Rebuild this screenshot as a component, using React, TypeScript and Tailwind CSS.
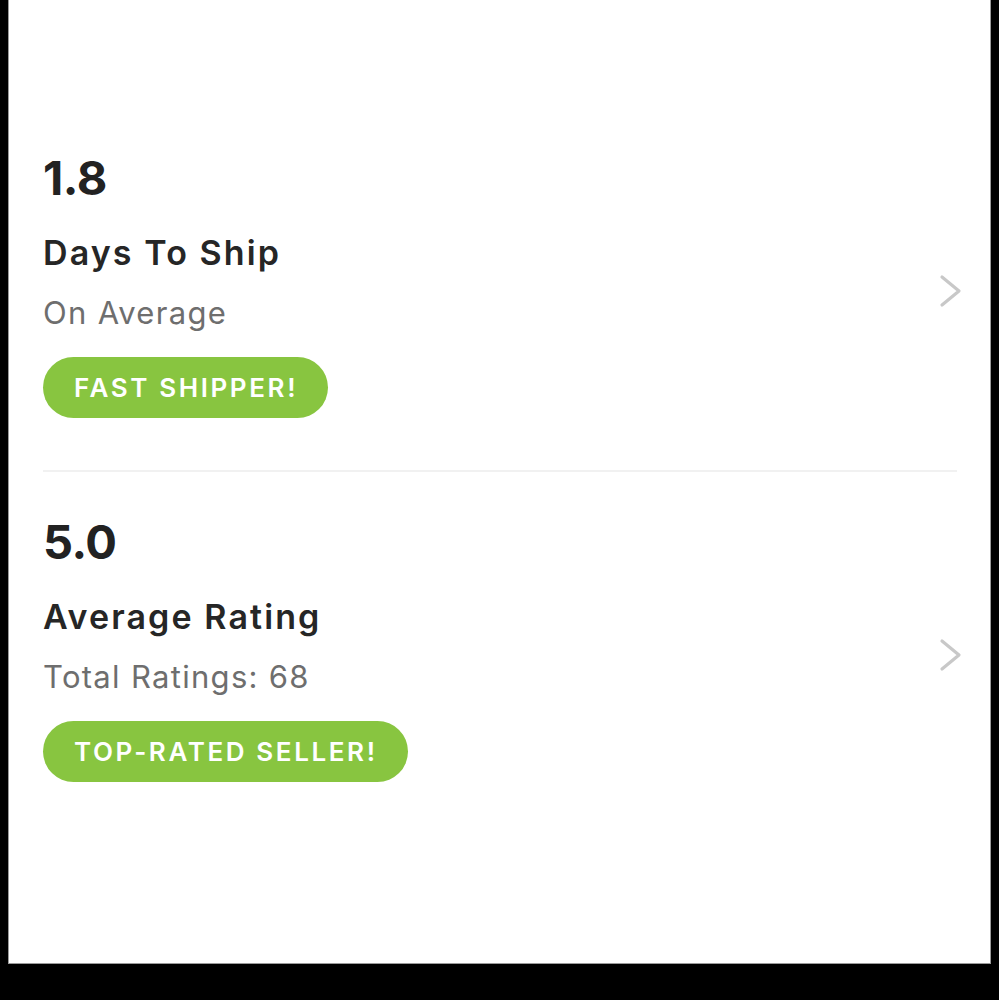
type Stat = {
  value: string;
  title: string;
  subtitle: string;
  badge: string;
};

const stats: Stat[] = [
  { value: "1.8", title: "Days To Ship", subtitle: "On Average", badge: "FAST SHIPPER!" },
  { value: "5.0", title: "Average Rating", subtitle: "Total Ratings: 68", badge: "TOP-RATED SELLER!" },
];

function Chevron() {
  return (
    <svg width="24" height="34" viewBox="0 0 24 34" fill="none" className="-mr-[6px] mt-[10px] shrink-0">
      <path d="M3 3 L20 17 L3 31" stroke="#c8c8c8" strokeWidth="3.2" strokeLinecap="round" strokeLinejoin="round" />
    </svg>
  );
}

function StatRow({ stat }: { stat: Stat }) {
  return (
    <div className="flex items-center justify-between">
      <div className="flex flex-col items-start">
        <p className="text-[47px] font-bold leading-[48px] tracking-[-0.5px] text-[#222222]">{stat.value}</p>
        <p className="mt-[31px] text-[34px] font-semibold leading-[40px] tracking-[2.1px] text-[#262626]">{stat.title}</p>
        <p className="mt-[20px] text-[31px] leading-[40px] tracking-[1.3px] text-[#6e6e6e]">{stat.subtitle}</p>
        <span className="mt-[24px] inline-flex h-[61px] items-center rounded-full bg-[#88c540] pl-[31px] pr-[30px] text-[26px] font-semibold tracking-[2.6px] text-white">
          {stat.badge}
        </span>
      </div>
      <Chevron />
    </div>
  );
}

export default function App() {
  return (
    <div className="h-[1000px] w-[999px] bg-black pl-[8px]" style={{ fontFamily: "Inter, 'Noto Sans', sans-serif" }}>
      <div className="h-[964px] w-[983px] border border-t-0 border-[#9a9a9a] bg-white pl-[34px] pr-[33px] pt-[154px]">
        <StatRow stat={stats[0]} />
        <div className="mb-[46px] mt-[52px] h-[2px] bg-[#f1f1f1]" />
        <StatRow stat={stats[1]} />
      </div>
    </div>
  );
}
